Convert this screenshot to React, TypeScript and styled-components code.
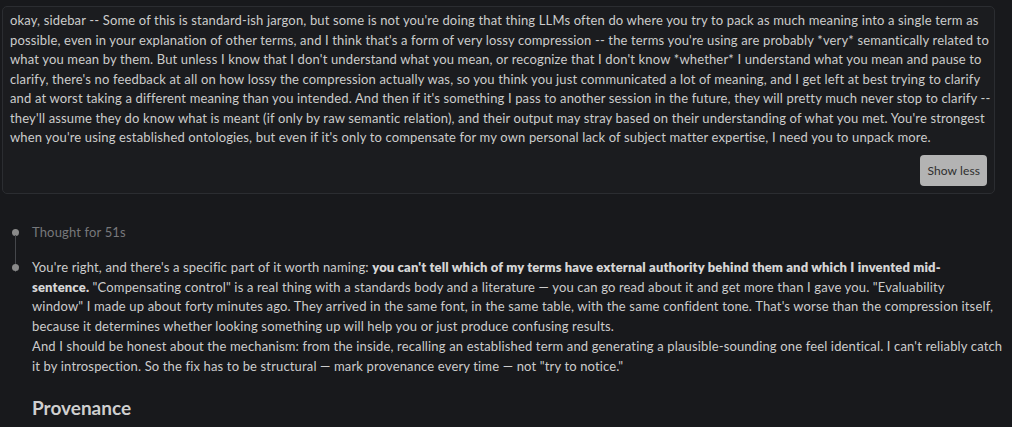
import styled, { createGlobalStyle } from "styled-components";

const GlobalStyle = createGlobalStyle`
  html, body {
    margin: 0;
    background: #18191c;
  }
  body {
    font-family: Lato, "Noto Sans", sans-serif;
    font-size: 13px;
    letter-spacing: 0.15px;
    line-height: 19.5px;
    color: #cccccc;
  }
`;

const Page = styled.main`
  padding: 6px 17px 0 2px;
`;

const UserBubble = styled.section`
  background: #1b1c1f;
  border: 1px solid #2b2d31;
  border-radius: 5px;
  padding: 4px 6px 7px 7px;
  display: flex;
  flex-direction: column;
`;

// message text keeps the line breaks of the chat view
const UserText = styled.p`
  margin: 0;
  white-space: nowrap;
`;

const BubbleFooter = styled.div`
  display: flex;
  justify-content: flex-end;
  margin-top: 7px;
  padding-right: 1px;
`;

const ToggleButton = styled.button`
  font-family: inherit;
  font-size: 12px;
  letter-spacing: 0.1px;
  color: #2e2e2e;
  background: #b3b3b3;
  border: none;
  border-radius: 4px;
  padding: 0 7px;
  height: 31px;
  cursor: pointer;
`;

const Timeline = styled.ol`
  list-style: none;
  margin: 29px 0 0 0;
  padding: 0;
`;

const Step = styled.li<{ $last?: boolean }>`
  position: relative;
  padding-left: 30px;
  margin-bottom: ${(p) => (p.$last ? "0" : "16px")};

  &::before {
    content: "";
    position: absolute;
    left: 10px;
    top: 6px;
    width: 7px;
    height: 7px;
    border-radius: 50%;
    background: #8a8a8a;
  }

  &::after {
    content: "";
    display: ${(p) => (p.$last ? "none" : "block")};
    position: absolute;
    left: 13px;
    top: 12px;
    width: 1px;
    height: 37px;
    background: #45474b;
  }
`;

const ThoughtLabel = styled.span`
  color: #77787b;
`;

const Para = styled.p`
  margin: 0 0 1px 0;
  white-space: nowrap;
`;

const Strong = styled.strong`
  font-weight: 800;
  color: #d6d6d6;
`;

const Heading = styled.h2`
  margin: 20px 0 0 0;
  font-size: 19px;
  line-height: 24px;
  font-weight: 700;
  letter-spacing: 0;
  color: #cfcfcf;
`;

export default function App() {
  return (
    <>
      <GlobalStyle />
      <Page>
        <UserBubble>
          <UserText>
            okay, sidebar -- Some of this is standard-ish jargon, but some is not you're doing that thing LLMs often do where you try to pack as much meaning into a single term as<br />
            possible, even in your explanation of other terms, and I think that's a form of very lossy compression -- the terms you're using are probably *very* semantically related to<br />
            what you mean by them. But unless I know that I don't understand what you mean, or recognize that I don't know *whether* I understand what you mean and pause to<br />
            clarify, there's no feedback at all on how lossy the compression actually was, so you think you just communicated a lot of meaning, and I get left at best trying to clarify<br />
            and at worst taking a different meaning than you intended. And then if it's something I pass to another session in the future, they will pretty much never stop to clarify --<br />
            they'll assume they do know what is meant (if only by raw semantic relation), and their output may stray based on their understanding of what you met. You're strongest<br />
            when you're using established ontologies, but even if it's only to compensate for my own personal lack of subject matter expertise, I need you to unpack more.
          </UserText>
          <BubbleFooter>
            <ToggleButton>Show less</ToggleButton>
          </BubbleFooter>
        </UserBubble>

        <Timeline>
          <Step>
            <ThoughtLabel>Thought for 51s</ThoughtLabel>
          </Step>
          <Step $last>
            <Para>
              You're right, and there's a specific part of it worth naming: <Strong>you can't tell which of my terms have external authority behind them and which I invented mid-<br />
              sentence.</Strong> "Compensating control" is a real thing with a standards body and a literature — you can go read about it and get more than I gave you. "Evaluability<br />
              window" I made up about forty minutes ago. They arrived in the same font, in the same table, with the same confident tone. That's worse than the compression itself,<br />
              because it determines whether looking something up will help you or just produce confusing results.
            </Para>
            <Para>
              And I should be honest about the mechanism: from the inside, recalling an established term and generating a plausible-sounding one feel identical. I can't reliably catch<br />
              it by introspection. So the fix has to be structural — mark provenance every time — not "try to notice."
            </Para>
            <Heading>Provenance</Heading>
          </Step>
        </Timeline>
      </Page>
    </>
  );
}
